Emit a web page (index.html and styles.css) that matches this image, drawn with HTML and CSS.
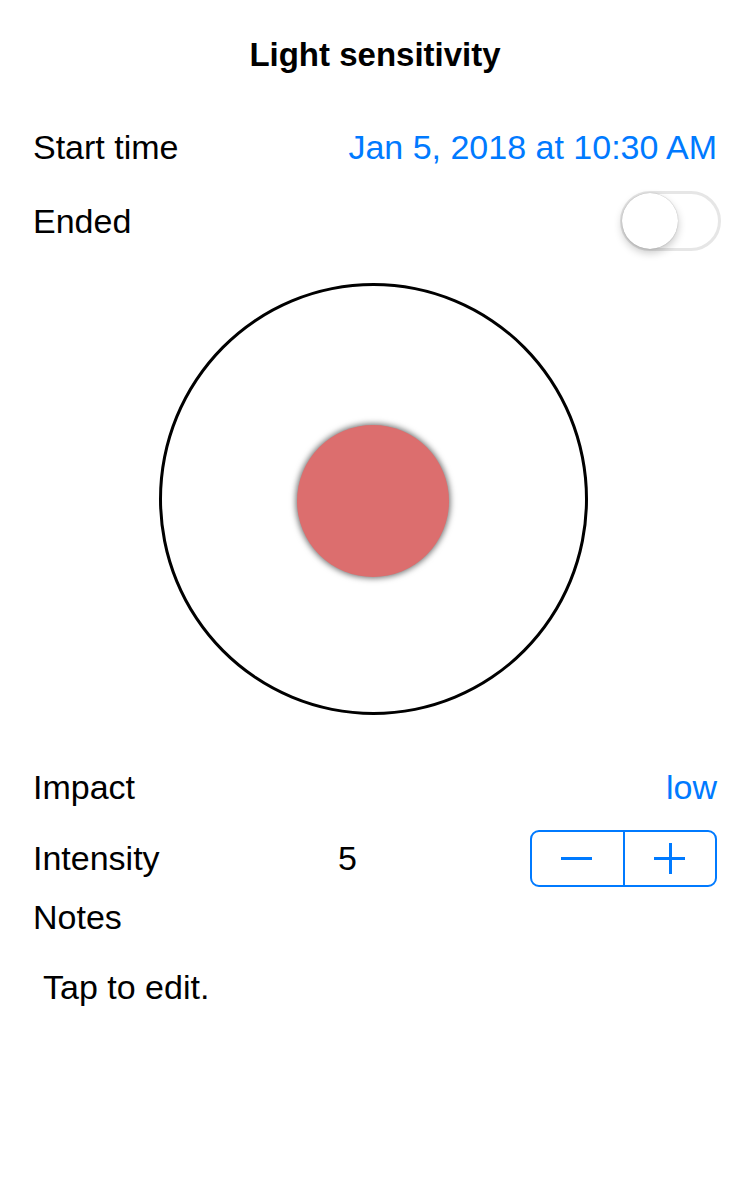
FILE: index.html
```html
<!DOCTYPE html>
<html>
<head>
  <title>Light sensitivity</title>
  <link rel="stylesheet" href="styles.css">
</head>
<body>
  <h1 class="title">Light sensitivity</h1>

  <div class="row row-start">
    <span class="label">Start time</span>
    <span class="value">Jan 5, 2018 at 10:30 AM</span>
  </div>

  <div class="row row-ended">
    <span class="label">Ended</span>
    <div class="switch"><div class="knob"></div></div>
  </div>

  <div class="target">
    <div class="ring">
      <div class="dot"></div>
    </div>
  </div>

  <div class="row row-impact">
    <span class="label">Impact</span>
    <span class="value">low</span>
  </div>

  <div class="row row-intensity">
    <span class="label label-fixed">Intensity</span>
    <span class="count">5</span>
    <div class="stepper">
      <div class="step step-minus"><span class="bar-h"></span></div>
      <div class="step step-plus"><span class="bar-h"></span><span class="bar-v"></span></div>
    </div>
  </div>

  <div class="row row-notes">
    <span class="label">Notes</span>
  </div>

  <div class="notes-text">Tap to edit.</div>
</body>
</html>
```

FILE: styles.css
```css
body {
  margin: 0;
  padding: 0 33px;
  background-color: #fff;
  color: #000;
  font-family: "Liberation Sans", Arial, sans-serif;
  font-size: 34px;
}

.title {
  margin: 0;
  height: 110px;
  line-height: 110px;
  font-size: 33px;
  font-weight: bold;
  text-align: center;
}

.row {
  display: flex;
  align-items: center;
  justify-content: space-between;
}
.row-start { height: 74px; }
.row-ended { height: 74px; }
.row-impact { height: 70px; margin-top: 37px; }
.row-intensity { height: 72px; justify-content: flex-start; }
.row-notes { height: 46px; }

.value {
  color: #007aff;
}

.label-fixed {
  width: 305px;
}
.count {
  flex: 1;
}

/* toggle */
.switch {
  width: 101px;
  height: 60px;
  box-sizing: border-box;
  border: 3px solid #e6e6e6;
  border-radius: 30px;
  margin-right: -4px;
  position: relative;
}
.knob {
  position: absolute;
  left: 0;
  top: 0;
  width: 56px;
  height: 56px;
  margin: -1px 0 0 -1px;
  border-radius: 50%;
  background-color: #fff;
  box-shadow: 0 0 1px rgba(0, 0, 0, 0.35), 0 4px 8px rgba(0, 0, 0, 0.22);
}

/* target */
.target {
  display: flex;
  justify-content: center;
  margin-top: 25px;
  padding-right: 4px;
}
.ring {
  width: 429px;
  height: 432px;
  box-sizing: border-box;
  border: 3px solid #000;
  border-radius: 50%;
  display: flex;
  align-items: center;
  justify-content: center;
}
.dot {
  width: 152px;
  height: 152px;
  border-radius: 50%;
  background-color: #dc6e6e;
  box-shadow: 0 0 6px 1px rgba(0, 0, 0, 0.6);
  margin-top: 3px;
}

/* stepper */
.stepper {
  display: flex;
  width: 187px;
  height: 57px;
  box-sizing: border-box;
  border: 2px solid #007aff;
  border-radius: 9px;
}
.step {
  flex: 1;
  position: relative;
}
.step-minus {
  border-right: 2px solid #007aff;
}
.bar-h {
  position: absolute;
  left: 50%;
  top: 50%;
  width: 31px;
  height: 3px;
  margin: -1px 0 0 -16px;
  background-color: #007aff;
}
.bar-v {
  position: absolute;
  left: 50%;
  top: 50%;
  width: 3px;
  height: 31px;
  margin: -15px 0 0 -1px;
  background-color: #007aff;
}

.notes-text {
  padding-left: 10px;
  height: 94px;
  line-height: 94px;
}
```
